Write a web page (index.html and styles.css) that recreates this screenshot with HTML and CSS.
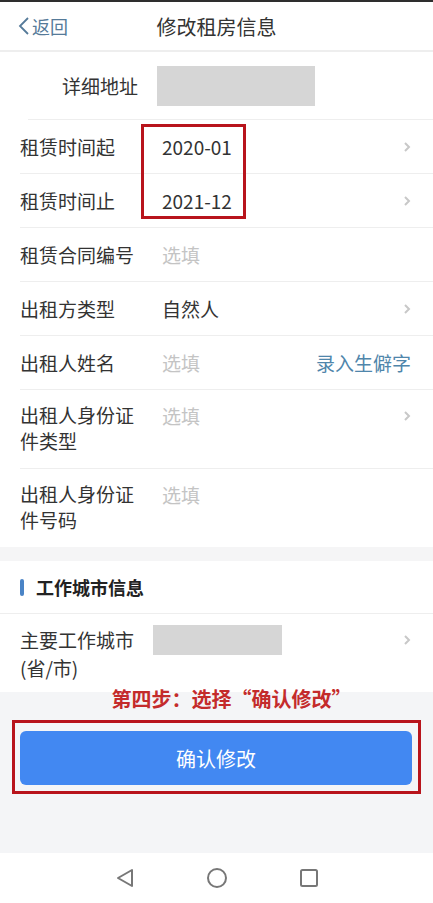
FILE: index.html
```html
<!DOCTYPE html>
<html lang="zh-CN">
<head>
  <meta charset="UTF-8" />
  <meta name="viewport" content="width=device-width, initial-scale=1.0"/>
  <title>修改租房信息</title>
  <link rel="stylesheet" href="styles.css">
</head>
<body>

<div class="topline"></div>

<header>
  <a class="back" href="#">
    <svg width="12" height="18" viewBox="0 0 12 18"><polyline points="10,1 2,9 10,17" fill="none" stroke="#557a99" stroke-width="1.8"/></svg>
    <span>返回</span>
  </a>
  <h1>修改租房信息</h1>
</header>

<div class="list first-list">
  <div class="row row-addr">
    <span class="label addr-label">详细地址</span>
    <div class="blur-box"></div>
  </div>

  <div class="row">
    <span class="label">租赁时间起</span>
    <span class="value">2020-01</span>
    <span class="arrow"><svg width="8" height="12" viewBox="0 0 8 12"><polyline points="2,2 6,6 2,10" fill="none" stroke="#c8c8c8" stroke-width="2"/></svg></span>
  </div>

  <div class="row">
    <span class="label">租赁时间止</span>
    <span class="value">2021-12</span>
    <span class="arrow"><svg width="8" height="12" viewBox="0 0 8 12"><polyline points="2,2 6,6 2,10" fill="none" stroke="#c8c8c8" stroke-width="2"/></svg></span>
  </div>

  <div class="row">
    <span class="label">租赁合同编号</span>
    <span class="value placeholder">选填</span>
  </div>

  <div class="row">
    <span class="label">出租方类型</span>
    <span class="value">自然人</span>
    <span class="arrow"><svg width="8" height="12" viewBox="0 0 8 12"><polyline points="2,2 6,6 2,10" fill="none" stroke="#c8c8c8" stroke-width="2"/></svg></span>
  </div>

  <div class="row">
    <span class="label">出租人姓名</span>
    <span class="value placeholder">选填</span>
    <a class="link" href="#">录入生僻字</a>
  </div>

  <div class="row row-tall">
    <span class="label narrow">出租人身份证件类型</span>
    <span class="value placeholder">选填</span>
    <span class="arrow"><svg width="8" height="12" viewBox="0 0 8 12"><polyline points="2,2 6,6 2,10" fill="none" stroke="#c8c8c8" stroke-width="2"/></svg></span>
  </div>

  <div class="row row-tall last">
    <span class="label narrow">出租人身份证件号码</span>
    <span class="value placeholder">选填</span>
  </div>

  <!-- annotation box drawn over the two date rows -->
  <div class="date-mark"></div>
</div>

<div class="gap"></div>

<div class="section-title">
  <span class="bar"></span>
  <span>工作城市信息</span>
</div>

<div class="list">
  <div class="row row-city last">
    <span class="label narrow">主要工作城市(省/市)</span>
    <div class="blur-box city-box"></div>
    <span class="arrow"><svg width="8" height="12" viewBox="0 0 8 12"><polyline points="2,2 6,6 2,10" fill="none" stroke="#c8c8c8" stroke-width="2"/></svg></span>
  </div>
</div>

<div class="bottom">
  <p class="note">第四步：选择“确认修改”</p>
  <div class="mark">
    <button type="button">确认修改</button>
  </div>
</div>

<nav class="navbar">
  <svg width="22" height="22" viewBox="0 0 22 22"><polygon points="18,3 18,19 4,11" fill="none" stroke="#777" stroke-width="2" stroke-linejoin="round"/></svg>
  <svg width="22" height="22" viewBox="0 0 22 22"><circle cx="11" cy="11" r="9" fill="none" stroke="#777" stroke-width="2"/></svg>
  <svg width="22" height="22" viewBox="0 0 22 22"><rect x="3" y="3" width="16" height="16" rx="1.5" fill="none" stroke="#777" stroke-width="2"/></svg>
</nav>

</body>
</html>
```

FILE: styles.css
```css
body {
  font-family: "Noto Sans CJK SC", "Noto Sans", sans-serif;
  background-color: #fff;
  color: #333;
  margin: 0;
  padding: 0;
  width: 433px;
}
.topline {
  height: 2px;
  background: #2e2e2e;
}
header {
  height: 48px;
  display: flex;
  align-items: center;
  justify-content: center;
  position: relative;
  border-bottom: 2px solid #eeeeee;
}
header h1 {
  margin: 0;
  font-size: 20px;
  font-weight: normal;
  color: #333;
}
.back {
  position: absolute;
  left: 18px;
  top: 0;
  height: 48px;
  display: flex;
  align-items: center;
  gap: 2px;
  color: #557a99;
  font-size: 18px;
  text-decoration: none;
}
.list {
  background: #fff;
}
.first-list {
  position: relative;
}
.date-mark {
  position: absolute;
  left: 141px;
  top: 72px;
  width: 99px;
  height: 89px;
  border: 3px solid #b8141c;
}
.row {
  display: flex;
  align-items: center;
  min-height: 53px;
  margin-left: 20px;
  padding-right: 22px;
  border-bottom: 1px solid #eeeeee;
  font-size: 19px;
}
.row.last {
  border-bottom: none;
}
.row-addr {
  min-height: 67px;
  margin-left: 28px;
}
.label {
  width: 142px;
  flex-shrink: 0;
  color: #333;
  line-height: 26px;
}
.addr-label {
  width: 129px;
  padding-left: 34px;
  box-sizing: border-box;
}
.label.narrow {
  width: 118px;
  margin-right: 24px;
}
.value {
  flex: 1;
  color: #333;
}
.placeholder {
  color: #c4c4c4;
}
.arrow {
  display: flex;
  align-items: center;
}
.link {
  color: #4f86ab;
  text-decoration: none;
}
.row-tall {
  align-items: flex-start;
  padding-top: 12px;
  padding-bottom: 14px;
  min-height: 0;
}
.row-tall .arrow {
  padding-top: 8px;
}
.blur-box {
  width: 158px;
  height: 40px;
  background: #d6d6d6;
}
.gap {
  height: 14px;
  background: #f5f5f6;
}
.section-title {
  display: flex;
  align-items: center;
  gap: 12px;
  height: 52px;
  padding-left: 20px;
  font-size: 18px;
  font-weight: bold;
  color: #222;
  border-bottom: 1px solid #eeeeee;
}
.bar {
  width: 4px;
  height: 17px;
  border-radius: 2px;
  background: #4a84c6;
}
.row-city {
  align-items: flex-start;
  padding-top: 12px;
  padding-bottom: 10px;
  line-height: 28px;
}
.row-city .label {
  line-height: 28px;
  margin-right: 15px;
}
.city-box {
  width: 129px;
  height: 30px;
  margin-top: -1px;
  flex: none;
}
.row-city .arrow {
  margin-left: auto;
  padding-top: 8px;
}
.bottom {
  background: #f4f5f7;
  height: 161px;
  padding-top: 1px;
  box-sizing: border-box;
}
.note {
  margin: -6px 0 0;
  text-align: center;
  font-size: 20px;
  font-weight: bold;
  color: #c42b2b;
  line-height: 24px;
  padding-left: 30px;
}
.mark {
  margin: 9px 12px 0 12px;
  border: 3px solid #b8141c;
  padding: 8px 6px 6px 5px;
}
button {
  display: block;
  width: 100%;
  height: 54px;
  border: none;
  border-radius: 6px;
  background: #4288f2;
  color: #fff;
  font-family: inherit;
  font-size: 20px;
}
.navbar {
  height: 50px;
  background: #fff;
  display: flex;
  justify-content: center;
  align-items: center;
  gap: 70px;
}
```
